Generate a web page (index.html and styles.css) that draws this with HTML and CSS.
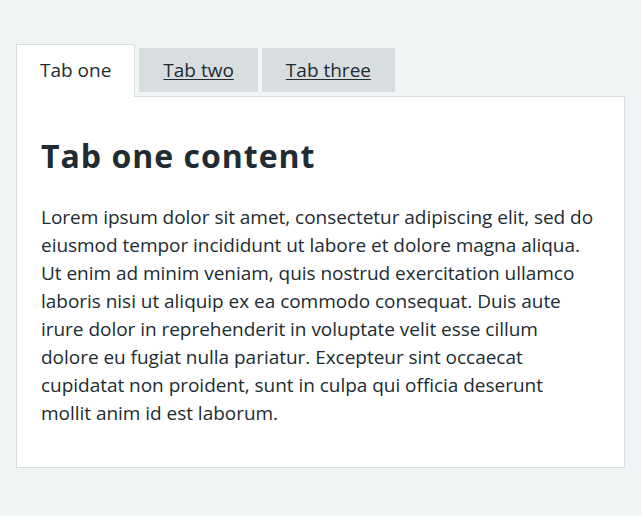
FILE: index.html
```html
<!DOCTYPE html>
<html lang="en">
<head>
<meta charset="utf-8">
<title>Tabs</title>
<link rel="stylesheet" href="styles.css">
</head>
<body>
<div class="tabs">
  <ul class="tabs-list">
    <li class="tab tab-selected"><a class="tab-link" href="#one">Tab one</a></li>
    <li class="tab"><a class="tab-link" href="#two">Tab two</a></li>
    <li class="tab"><a class="tab-link" href="#three">Tab three</a></li>
  </ul>
  <div class="panel" id="one">
    <h2 class="panel-title">Tab one content</h2>
    <p class="panel-text">Lorem ipsum dolor sit amet, consectetur adipiscing elit, sed do eiusmod tempor incididunt ut labore et dolore magna aliqua. Ut enim ad minim veniam, quis nostrud exercitation ullamco laboris nisi ut aliquip ex ea commodo consequat. Duis aute irure dolor in reprehenderit in voluptate velit esse cillum dolore eu fugiat nulla pariatur. Excepteur sint occaecat cupidatat non proident, sunt in culpa qui officia deserunt mollit anim id est laborum.</p>
  </div>
</div>
</body>
</html>
```

FILE: styles.css
```css
html, body {
  margin: 0;
  padding: 0;
  background: #f0f4f5;
}

body {
  font-family: "Open Sans", "Noto Sans", Arial, sans-serif;
  color: #212b32;
  font-size: 19px;
  line-height: 28px;
  padding: 48px 16px 48px;
}

.tabs-list {
  display: flex;
  align-items: flex-start;
  gap: 4px;
  list-style: none;
  margin: 0;
  padding: 0;
}

.tab {
  background: #d8dde0;
  padding: 8px 24px;
  text-align: center;
}

.tab-selected {
  position: relative;
  z-index: 1;
  background: #ffffff;
  border: 1px solid #d8dde0;
  border-bottom: 0;
  margin-top: -4px;
  margin-bottom: -1px;
  padding: 11px 23px 13px;
}

.tab-link {
  color: #212b32;
  text-decoration: underline;
  text-underline-offset: 2px;
  text-decoration-thickness: 1px;
}

.tab-selected .tab-link {
  text-decoration: none;
}

.panel {
  background: #ffffff;
  border: 1px solid #d8dde0;
  padding: 39px 24px 40px;
}

.panel-title {
  margin: 0 0 27px;
  font-size: 32px;
  line-height: 40px;
  font-weight: 700;
  letter-spacing: 1px;
}

.panel-text {
  margin: 0;
  max-width: 553px;
  letter-spacing: -0.03px;
}
```
